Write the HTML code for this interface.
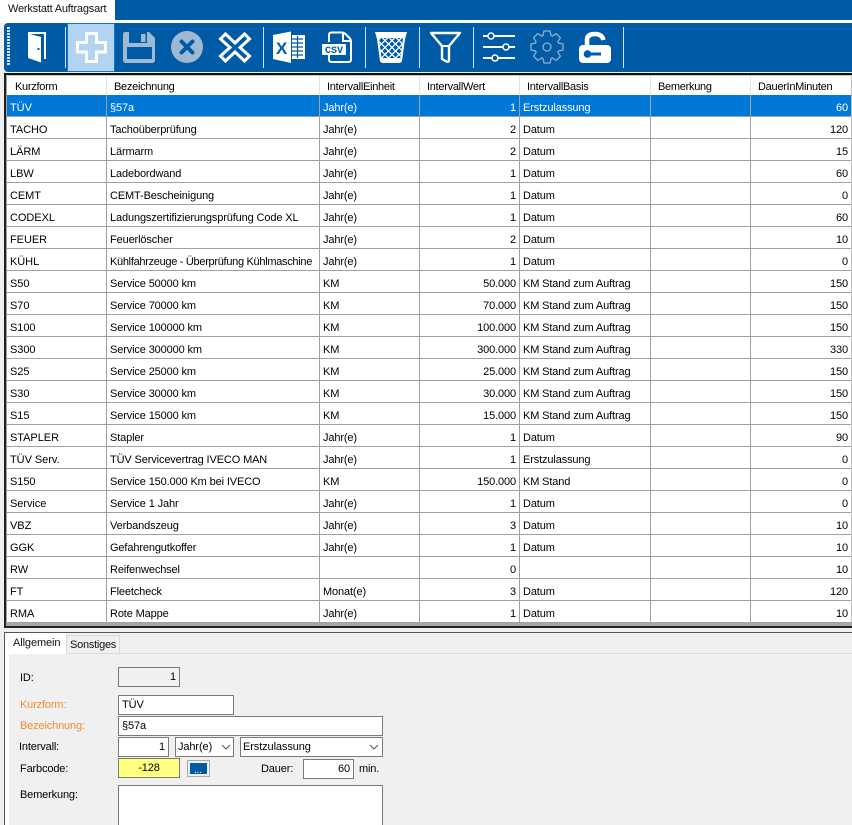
<!DOCTYPE html>
<html><head><meta charset="utf-8"><style>
html,body{margin:0;padding:0;background:#f0f0f0}
#p{position:relative;width:852px;height:825px;overflow:hidden;background:#f0f0f0;font:11px/13px "Liberation Sans",sans-serif;color:#000}
.a{position:absolute}
.t{position:absolute;white-space:nowrap;letter-spacing:-.15px}
table{position:absolute;left:6px;top:76px;width:845px;border-collapse:separate;border-spacing:0;table-layout:fixed;background:#fff}
td,th{white-space:nowrap;overflow:hidden;font-weight:normal;text-align:left;border-right:1px solid #a0a0a0;border-bottom:1px solid #a0a0a0;font-size:11px;line-height:13px}
td{padding:6px 2px 0 3px;height:15px;letter-spacing:-.13px}
td:first-child{padding-left:4px;letter-spacing:-.05px}
th{height:15px;padding:4px 0 0 9px;border-right:1px solid #e3e3e3;border-bottom:0;letter-spacing:-.28px}
td.r{text-align:right;padding-right:3px}
tr.s td{background:#0078d7;color:#fff}
td:last-child{border-right:0}th:last-child{border-right:0}
.i{position:absolute;box-sizing:border-box;border:1px solid #7a7a7a;background:#fff;height:20px;font-size:11px;line-height:19px;padding:0 3px;white-space:nowrap;letter-spacing:-.1px}
.sep{position:absolute;top:27px;width:1px;height:41px;background:#d8e4f0}
svg{position:absolute;left:0;top:0}
</style></head><body><div id="p">
<div class="a" style="left:0;top:0;width:852px;height:20px;background:#005ba6"></div>
<div class="a" style="left:0;top:0;width:115px;height:20px;background:#fff"></div>
<div class="t" style="left:8px;top:2px;color:#111;letter-spacing:-.2px;line-height:15px">Werkstatt Auftragsart</div>
<div class="a" style="left:0;top:20px;width:852px;height:3px;background:#fff"></div>
<div class="a" style="left:4px;top:23px;width:848px;height:49px;background:#005ba6;border-radius:4px 0 0 4px"></div>
<div class="a" style="left:67px;top:23px;width:48px;height:49px;box-sizing:border-box;background:#b3d4f0;border:1px solid #0a78d0"></div>
<div class="sep" style="left:65px"></div><div class="sep" style="left:263px"></div><div class="sep" style="left:365px"></div><div class="sep" style="left:419px"></div><div class="sep" style="left:473px"></div><div class="sep" style="left:623px"></div>
<svg width="852" height="76" viewBox="0 0 852 76">
<defs><pattern id="lat" width="7" height="7" patternUnits="userSpaceOnUse" x="378" y="37"><path d="M3.500 0.900L6.100 3.500L3.500 6.100L0.900 3.500Z" fill="#005ba6"/><path d="M0 -2.600L2.600 0L0 2.600L-2.600 0ZM7 -2.600L9.600 0L7 2.600L4.400 0ZM0 4.400L2.600 7L0 9.600L-2.600 7ZM7 4.400L9.600 7L7 9.600L4.400 7Z" fill="#005ba6"/></pattern></defs>
<line x1="8.500" y1="27" x2="8.500" y2="65" stroke="#d5e2ee" stroke-width="3" stroke-dasharray="2 1"/>
<!-- door -->
<path d="M28 32H46V59H44V34H28Z" fill="#fff"/><path d="M28 33.500L41 37V62.500L28 58Z" fill="#fff"/><rect x="37.500" y="48" width="2" height="2" fill="#005ba6"/>
<!-- plus -->
<path d="M86.500 33.500H96.500V42.500H105.500V52H96.500V61.500H86.500V52H77.500V42.500H86.500Z" fill="none" stroke="#fff" stroke-width="3"/>
<!-- save -->
<path d="M125 32H149L155 38V60Q155 63 152 63H126Q123 63 123 60V35Q123 32 125 32Z" fill="#9fb9d3"/><path d="M129 32H147V43H129Z" fill="#005ba6"/><rect x="141" y="34" width="4.500" height="8" fill="#9fb9d3"/><rect x="127" y="47" width="25" height="12" fill="#005ba6"/>
<!-- cancel -->
<circle cx="187" cy="47" r="16" fill="#9fb9d3"/><path d="M181.500 41.500L192.500 52.500M192.500 41.500L181.500 52.500" stroke="#005ba6" stroke-width="4" stroke-linecap="round"/>
<!-- x -->
<path d="M225.500 34L235 43L244.500 34L249.500 39L240 47.500L249.500 56L244.500 61L235 52L225.500 61L220.500 56L230 47.500L220.500 39Z" fill="none" stroke="#fff" stroke-width="3"/>
<!-- excel -->
<path d="M273 35L291 31.500V63L273 59Z" fill="#fff"/><path d="M292 35H305V59H292Z" fill="#fff"/><path d="M292 39H303M292 43H303M292 47H303M292 51H303M292 55H303M297.500 36V58" stroke="#005ba6" stroke-width="1.200"/>
<text x="276" y="54" font-family="Liberation Sans" font-size="17" font-weight="bold" fill="#005ba6">X</text>
<!-- csv -->
<path d="M329 42V35Q329 32.500 331.500 32.500H342Q344 32.500 346 34.500L349.500 38Q351 39.500 351 42V59.500Q351 62 348.500 62H331.500Q329 62 329 59.500V55" fill="none" stroke="#fff" stroke-width="2"/>
<path d="M343 33V41H351" fill="none" stroke="#fff" stroke-width="2"/>
<rect x="322" y="44" width="24" height="11" rx="1" fill="#fff"/>
<text x="325" y="53" font-family="Liberation Mono" font-size="10" font-weight="bold" fill="#005ba6">CSV</text>
<!-- trash -->
<path d="M375 32H407L405 39L402 61Q401 63 399 63H383Q381 63 380 61L377 39Z" fill="#fff"/>
<path d="M379 38H403L400.500 58H381.500Z" fill="url(#lat)"/>
<!-- funnel -->
<path d="M431 33H460L449 46V60Q449 62.500 446.500 61.500L442 59V46Z" fill="none" stroke="#fff" stroke-width="2.400" stroke-linejoin="round"/>
<path d="M442 46H449" stroke="#fff" stroke-width="2"/>
<!-- sliders -->
<g stroke="#fff" stroke-width="2" fill="#005ba6"><path d="M483 36H515M483 47H515M483 58H515"/><circle cx="491" cy="36" r="3" stroke-width="1.500"/><circle cx="506" cy="47" r="3" stroke-width="1.500"/><circle cx="495" cy="58" r="3" stroke-width="1.500"/></g>
<!-- gear -->
<g fill="none" stroke="#8fadcb" stroke-width="1.300" transform="translate(547 47)"><circle r="4"/>
<path d="M-3 -16L3 -16L4 -11.500L5.300 -10.900L9.200 -13.400L13.400 -9.200L10.900 -5.300L11.500 -4L16 -3L16 3L11.500 4L10.900 5.300L13.400 9.200L9.200 13.400L5.300 10.900L4 11.500L3 16L-3 16L-4 11.500L-5.300 10.900L-9.200 13.400L-13.400 9.200L-10.900 5.300L-11.500 4L-16 3L-16 -3L-11.500 -4L-10.900 -5.300L-13.400 -9.200L-9.200 -13.400L-5.300 -10.900L-4 -11.500Z"/></g>
<!-- lock -->
<rect x="579" y="45" width="32" height="18" rx="4" fill="#fff"/><path d="M587 46V40Q587 34 595 34Q602 34 603.500 40" fill="none" stroke="#fff" stroke-width="4.500"/>
<circle cx="587.500" cy="54" r="3.800" fill="#005ba6"/><rect x="588" y="52.500" width="13" height="3" fill="#005ba6"/>
</svg>
<div class="a" style="left:4px;top:73px;width:848px;height:2px;background:#111"></div>
<div class="a" style="left:6px;top:75px;width:846px;height:1px;background:#c8c8c8"></div>
<table><colgroup><col style="width:101px"><col style="width:213px"><col style="width:100px"><col style="width:100px"><col style="width:131px"><col style="width:100px"><col style="width:100px"></colgroup>
<tr><th>Kurzform</th><th style="padding-left:7px">Bezeichnung</th><th style="padding-left:7px">IntervallEinheit</th><th style="padding-left:7px">IntervallWert</th><th style="padding-left:7px">IntervallBasis</th><th style="padding-left:7px">Bemerkung</th><th style="padding-left:7px">DauerInMinuten</th></tr>
<tr class="s"><td>TÜV</td><td>§57a</td><td>Jahr(e)</td><td class="r">1</td><td>Erstzulassung</td><td></td><td class="r">60</td></tr>
<tr><td>TACHO</td><td>Tachoüberprüfung</td><td>Jahr(e)</td><td class="r">2</td><td>Datum</td><td></td><td class="r">120</td></tr>
<tr><td>LÄRM</td><td>Lärmarm</td><td>Jahr(e)</td><td class="r">2</td><td>Datum</td><td></td><td class="r">15</td></tr>
<tr><td>LBW</td><td>Ladebordwand</td><td>Jahr(e)</td><td class="r">1</td><td>Datum</td><td></td><td class="r">60</td></tr>
<tr><td>CEMT</td><td>CEMT-Bescheinigung</td><td>Jahr(e)</td><td class="r">1</td><td>Datum</td><td></td><td class="r">0</td></tr>
<tr><td>CODEXL</td><td>Ladungszertifizierungsprüfung Code XL</td><td>Jahr(e)</td><td class="r">1</td><td>Datum</td><td></td><td class="r">60</td></tr>
<tr><td>FEUER</td><td>Feuerlöscher</td><td>Jahr(e)</td><td class="r">2</td><td>Datum</td><td></td><td class="r">10</td></tr>
<tr><td>KÜHL</td><td style="letter-spacing:-.3px">Kühlfahrzeuge - Überprüfung Kühlmaschine</td><td>Jahr(e)</td><td class="r">1</td><td>Datum</td><td></td><td class="r">0</td></tr>
<tr><td>S50</td><td>Service 50000 km</td><td>KM</td><td class="r">50.000</td><td>KM Stand zum Auftrag</td><td></td><td class="r">150</td></tr>
<tr><td>S70</td><td>Service 70000 km</td><td>KM</td><td class="r">70.000</td><td>KM Stand zum Auftrag</td><td></td><td class="r">150</td></tr>
<tr><td>S100</td><td>Service 100000 km</td><td>KM</td><td class="r">100.000</td><td>KM Stand zum Auftrag</td><td></td><td class="r">150</td></tr>
<tr><td>S300</td><td>Service 300000 km</td><td>KM</td><td class="r">300.000</td><td>KM Stand zum Auftrag</td><td></td><td class="r">330</td></tr>
<tr><td>S25</td><td>Service 25000 km</td><td>KM</td><td class="r">25.000</td><td>KM Stand zum Auftrag</td><td></td><td class="r">150</td></tr>
<tr><td>S30</td><td>Service 30000 km</td><td>KM</td><td class="r">30.000</td><td>KM Stand zum Auftrag</td><td></td><td class="r">150</td></tr>
<tr><td>S15</td><td>Service 15000 km</td><td>KM</td><td class="r">15.000</td><td>KM Stand zum Auftrag</td><td></td><td class="r">150</td></tr>
<tr><td>STAPLER</td><td>Stapler</td><td>Jahr(e)</td><td class="r">1</td><td>Datum</td><td></td><td class="r">90</td></tr>
<tr><td>TÜV Serv.</td><td>TÜV Servicevertrag IVECO MAN</td><td>Jahr(e)</td><td class="r">1</td><td>Erstzulassung</td><td></td><td class="r">0</td></tr>
<tr><td>S150</td><td>Service 150.000 Km bei IVECO</td><td>KM</td><td class="r">150.000</td><td>KM Stand</td><td></td><td class="r">0</td></tr>
<tr><td>Service</td><td>Service 1 Jahr</td><td>Jahr(e)</td><td class="r">1</td><td>Datum</td><td></td><td class="r">0</td></tr>
<tr><td>VBZ</td><td>Verbandszeug</td><td>Jahr(e)</td><td class="r">3</td><td>Datum</td><td></td><td class="r">10</td></tr>
<tr><td>GGK</td><td>Gefahrengutkoffer</td><td>Jahr(e)</td><td class="r">1</td><td>Datum</td><td></td><td class="r">10</td></tr>
<tr><td>RW</td><td>Reifenwechsel</td><td></td><td class="r">0</td><td></td><td></td><td class="r">10</td></tr>
<tr><td>FT</td><td>Fleetcheck</td><td>Monat(e)</td><td class="r">3</td><td>Datum</td><td></td><td class="r">120</td></tr>
<tr><td>RMA</td><td>Rote Mappe</td><td>Jahr(e)</td><td class="r">1</td><td>Datum</td><td></td><td class="r">10</td></tr>
</table>
<div class="a" style="left:4px;top:75px;width:2px;height:553px;background:#222"></div>
<div class="a" style="left:6px;top:76px;width:1px;height:548px;background:#a0a0a0"></div>
<div class="a" style="left:851px;top:76px;width:1px;height:550px;background:#c0c0c0"></div>
<div class="a" style="left:6px;top:623px;width:846px;height:3px;background:#a8a8a8"></div>
<div class="a" style="left:4px;top:626px;width:848px;height:2px;background:#222"></div>
<!-- lower panel -->
<div class="a" style="left:5px;top:633px;width:847px;height:192px;background:#f0f0f0"></div>
<div class="a" style="left:5px;top:633px;width:4px;height:192px;background:#fff"></div>
<div class="a" style="left:5px;top:633px;width:61px;height:21px;background:#fff"></div>
<div class="a" style="left:4px;top:632px;width:848px;height:1px;background:#555"></div>
<div class="a" style="left:4px;top:632px;width:1px;height:193px;background:#555"></div>
<div class="a" style="left:66px;top:635px;width:54px;height:19px;box-sizing:border-box;background:#f0f0f0;border:1px solid #d9d9d9;border-bottom:0"></div>
<div class="a" style="left:66px;top:653px;width:786px;height:1px;background:#dcdcdc"></div>
<div class="t" style="left:13px;top:637px;color:#111;letter-spacing:-.1px">Allgemein</div>
<div class="t" style="left:70px;top:639px;color:#111;letter-spacing:-.25px">Sonstiges</div>
<div class="t" style="left:20px;top:672px">ID:</div>
<div class="i" style="left:118px;top:667px;width:62px;background:#f0f0f0;text-align:right">1</div>
<div class="t" style="left:20px;top:699px;color:#f58a2e">Kurzform:</div>
<div class="i" style="left:118px;top:695px;width:116px">TÜV</div>
<div class="t" style="left:20px;top:720px;color:#f58a2e">Bezeichnung:</div>
<div class="i" style="left:118px;top:716px;width:265px">§57a</div>
<div class="t" style="left:19px;top:741px">Intervall:</div>
<div class="i" style="left:118px;top:737px;width:51px;text-align:right">1</div>
<div class="i" style="left:175px;top:737px;width:59px;padding-left:2px">Jahr(e)</div>
<div class="i" style="left:240px;top:737px;width:143px;padding-left:2px">Erstzulassung</div>
<svg width="852" height="825" style="pointer-events:none"><path d="M222 745L226 749L230 745M370 745L374 749L378 745" fill="none" stroke="#555" stroke-width="1"/></svg>
<div class="t" style="left:20px;top:763px">Farbcode:</div>
<div class="i" style="left:118px;top:758px;width:62px;background:#ffff80;text-align:center">-128</div>
<div class="a" style="left:187px;top:760px;width:23px;height:17px;box-sizing:border-box;background:#005ba6;border:3px solid #f0f0f0;outline:1px solid #ababab;outline-offset:-1px"></div>
<div class="t" style="left:194px;top:764px;color:#fff;font-size:10px">...</div>
<div class="t" style="left:261px;top:763px">Dauer:</div>
<div class="i" style="left:303px;top:759px;width:51px;text-align:right">60</div>
<div class="t" style="left:359px;top:763px">min.</div>
<div class="t" style="left:20px;top:789px">Bemerkung:</div>
<div class="i" style="left:118px;top:785px;width:265px;height:60px"></div>
</div></body></html>
